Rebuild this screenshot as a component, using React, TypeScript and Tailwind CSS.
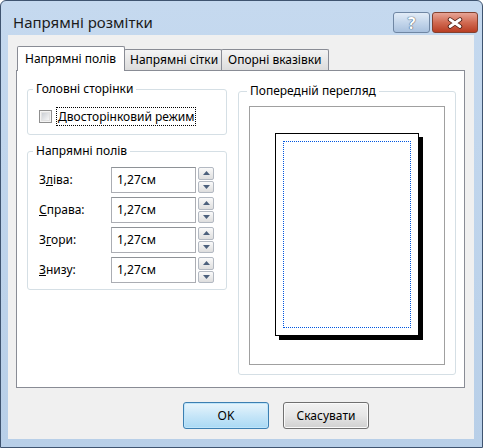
import React from 'react';

const fontUi = "font-['Noto_Sans','DejaVu_Sans',sans-serif]";

const Spinner: React.FC = () => (
  <div className="flex flex-col gap-[1px] w-[16px] h-[26px]">
    <div className="flex-1 flex items-center justify-center border border-[#b3b9c2] rounded-[2px] bg-gradient-to-b from-[#fafafa] to-[#dedede]">
      <svg width="7" height="4" viewBox="0 0 7 4">
        <path d="M0 4 L3.5 0 L7 4 Z" fill="#4c607c" />
      </svg>
    </div>
    <div className="flex-1 flex items-center justify-center border border-[#b3b9c2] rounded-[2px] bg-gradient-to-b from-[#fafafa] to-[#dedede]">
      <svg width="7" height="4" viewBox="0 0 7 4">
        <path d="M0 0 L7 0 L3.5 4 Z" fill="#4c607c" />
      </svg>
    </div>
  </div>
);

const MarginRow: React.FC<{ label: React.ReactNode }> = ({ label }) => (
  <div className="flex items-center h-[26px]">
    <div className="w-[72px] text-[12px] text-black">{label}</div>
    <div className="w-[85px] h-[26px] flex items-center pl-[5px] border border-[#abadb3] border-t-[#8e9297] bg-white text-[12px] text-black">
      1,27см
    </div>
    <div className="ml-[2px]">
      <Spinner />
    </div>
  </div>
);

const App: React.FC = () => {
  return (
    <div className={`w-[483px] h-[448px] flex flex-col border border-[#3f5470] rounded-t-[6px] bg-gradient-to-b from-[#c5d9ef] to-[#b8cfe8] pl-[7px] pr-[8px] pb-[8px] ${fontUi}`}>
      {/* Title bar */}
      <div className="h-[34px] flex items-start shrink-0">
        <div className="pl-[5px] pt-[11px] text-[15px] leading-[20px] text-[#1b1b1b]">Напрямні розмітки</div>
        <div className="ml-auto -mr-[4px] mt-[11px] flex gap-[2px]">
          <div className="w-[37px] h-[21px] rounded-[3px] border border-[#6f86a3] bg-gradient-to-b from-[#e2ecf7] via-[#c4d6eb] to-[#a9c1de] flex items-center justify-center">
            <span className="text-[16px] font-bold leading-none text-white [text-shadow:0_0_1px_#34495f,0_0_1px_#34495f]">?</span>
          </div>
          <div className="w-[46px] h-[21px] rounded-[3px] border border-[#83412f] bg-gradient-to-b from-[#e6a496] via-[#d06a52] to-[#b93d22] flex items-center justify-center">
            <svg width="16" height="12" viewBox="0 0 16 12">
              <path d="M3 2.5 L13 9.5 M13 2.5 L3 9.5" stroke="#4a1a10" strokeWidth="4.4" strokeLinecap="round" />
              <path d="M3 2.5 L13 9.5 M13 2.5 L3 9.5" stroke="#ffffff" strokeWidth="2.8" strokeLinecap="round" />
            </svg>
          </div>
        </div>
      </div>

      {/* Client area */}
      <div className="flex-1 flex flex-col bg-[#f0f0f0] pt-[11px]">
        {/* Tabs */}
        <div className="flex items-end ml-[9px] h-[24px] text-[12px] text-black">
          <div className="relative z-10 w-[108px] h-[25px] -mb-px flex items-center pl-[7px] bg-white border border-b-0 border-[#898c95] rounded-t-[2px]">
            Напрямні полів
          </div>
          <div className="w-[98px] h-[21px] -ml-px flex items-center pl-[5px] border border-b-0 border-[#898c95] rounded-t-[2px] bg-gradient-to-b from-[#f4f4f4] to-[#dcdcdc]">
            Напрямні сітки
          </div>
          <div className="w-[108px] h-[21px] -ml-px flex items-center pl-[6px] border border-b-0 border-[#898c95] rounded-t-[2px] bg-gradient-to-b from-[#f4f4f4] to-[#dcdcdc]">
            Опорні вказівки
          </div>
        </div>

        {/* Tab panel */}
        <div className="ml-[8px] w-[449px] h-[318px] bg-white border border-[#898c95] flex pt-[10px] pl-[10px] text-[12px] text-black">
          {/* Left column */}
          <div className="w-[200px] flex flex-col gap-[8px]">
            <fieldset className="border border-[#d5dfe5] rounded-[3px] pl-[11px] pt-[10px] pb-[7px] h-[54px]">
              <legend className="-ml-[6px] px-[3px] leading-[16px]">Головні сторінки</legend>
              <div className="flex items-center h-[19px]">
                <div className="w-[13px] h-[13px] border border-[#8f8f8f] bg-[#f4f4f4] p-[1px]">
                  <div className="w-full h-full bg-gradient-to-br from-[#cbcfd5] to-[#f7f7f7] border border-[#e2e2e2]" />
                </div>
                <div className="ml-[4px] h-[19px] flex items-center px-[1px] border border-dotted border-black">
                  <span className="underline">Д</span>восторінковий режим
                </div>
              </div>
            </fieldset>

            <fieldset className="border border-[#d5dfe5] rounded-[3px] pl-[11px] pt-[8px] h-[147px]">
              <legend className="-ml-[6px] px-[3px] leading-[16px]">Напрямні полів</legend>
              <div className="flex flex-col gap-[4px]">
                <MarginRow label={<>З<span className="underline">л</span>іва:</>} />
                <MarginRow label={<><span className="underline">С</span>права:</>} />
                <MarginRow label={<>З<span className="underline">г</span>ори:</>} />
                <MarginRow label={<><span className="underline">З</span>низу:</>} />
              </div>
            </fieldset>
          </div>

          {/* Preview */}
          <fieldset className="ml-[11px] mt-[2px] w-[218px] h-[292px] border border-[#d5dfe5] rounded-[3px] pl-[10px] pt-[7px]">
            <legend className="-ml-[2px] px-[3px] leading-[16px]">Попередній перегляд</legend>
            <div className="w-[196px] h-[259px] border border-[#a0a0a0] bg-white flex items-center justify-center">
              <div className="w-[144px] h-[203px] border border-black bg-white shadow-[4px_4px_0_#000] p-[7px] -mt-[2px] -ml-[1px]">
                <div className="w-full h-full border border-dotted border-[#0057e0]" />
              </div>
            </div>
          </fieldset>
        </div>

        {/* Buttons */}
        <div className="flex gap-[14px] mt-[14px] pl-[175px] text-[12px] text-black">
          <button className="w-[86px] h-[27px] rounded-[3px] border border-[#3c7fb1] bg-gradient-to-b from-[#e8f5fc] via-[#c7e6f8] to-[#a9d9f4] shadow-[inset_0_0_0_1px_#bfe5fa]">
            OK
          </button>
          <button className="w-[86px] h-[27px] rounded-[3px] border border-[#707070] bg-gradient-to-b from-[#f2f2f2] via-[#e6e6e6] to-[#d0d0d0] shadow-[inset_0_0_0_1px_#fafafa]">
            Скасувати
          </button>
        </div>
      </div>
    </div>
  );
};

export default App;
